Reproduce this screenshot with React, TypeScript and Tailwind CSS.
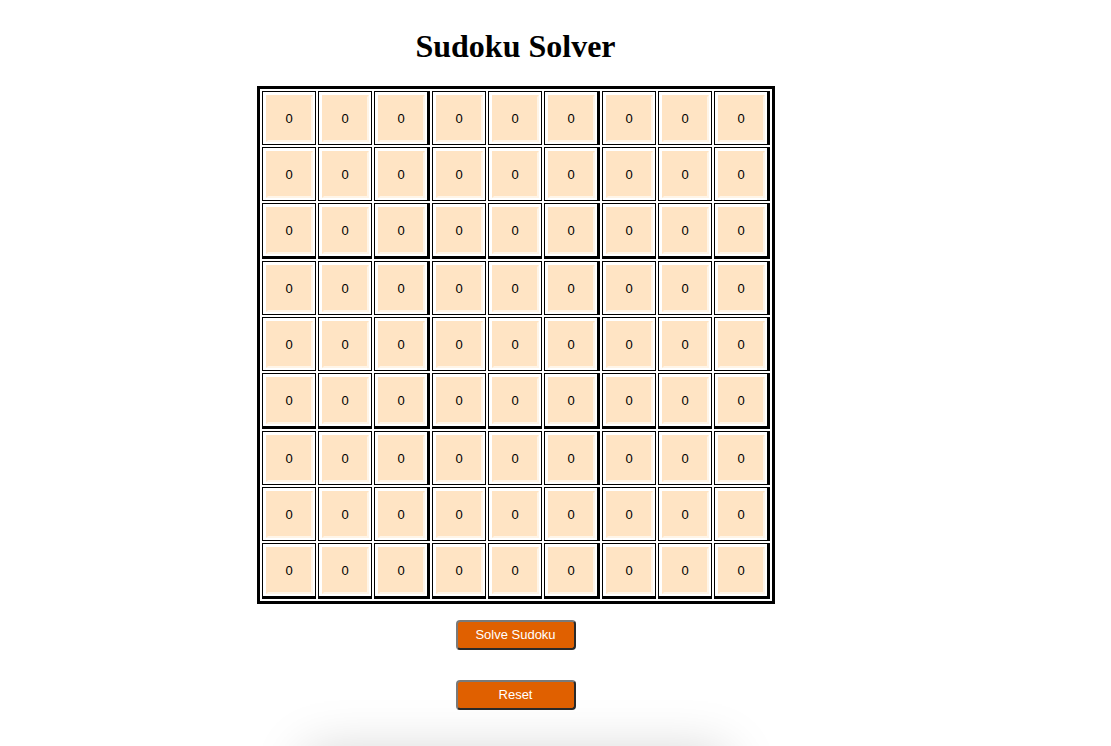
import React, { useState } from 'react';

const emptyBoard = () => Array.from({ length: 9 }, () => Array.from({ length: 9 }, () => 0));

const App = () => {
  const [board, setBoard] = useState<number[][]>(emptyBoard());

  const update = (r: number, c: number, v: string) => {
    const n = parseInt(v, 10);
    const next = board.map((row) => [...row]);
    next[r][c] = isNaN(n) ? 0 : Math.max(0, Math.min(9, n));
    setBoard(next);
  };

  return (
    <div className="w-[1031px] flex flex-col items-center pt-[28px] font-['Liberation_Sans',Arial,sans-serif]">
      <h1 className="font-['Liberation_Serif','Times_New_Roman',serif] font-bold text-[32px] leading-[37px] text-black mb-[21px]">
        Sudoku Solver
      </h1>
      <table className="border-separate border-spacing-[2px] border-[3px] border-black">
        <tbody>
          {board.map((row, r) => (
            <tr key={r}>
              {row.map((val, c) => (
                <td
                  key={c}
                  className={`p-0 border-black border-t border-l ${
                    c % 3 === 2 ? 'border-r-[3px]' : 'border-r'
                  } ${r % 3 === 2 ? 'border-b-[3px]' : 'border-b'}`}
                >
                  <div className="pt-[3px] pl-[3px] pr-[2px] pb-[2px]">
                    <input
                      value={val}
                      onChange={(e) => update(r, c, e.target.value)}
                      className="block w-[47px] h-[47px] bg-[#ffe4c4] text-center text-[13px] text-black border-2 border-t-[#ffe4c4] border-l-[#ffe4c4] border-r-[#fff5e8] border-b-[#fff5e8] outline-none"
                    />
                  </div>
                </td>
              ))}
            </tr>
          ))}
        </tbody>
      </table>
      <button
        onClick={() => {}}
        className="mt-[16px] w-[120px] h-[30px] bg-[#e06000] text-white text-[13px] rounded-[4px] border-2 border-t-[#7a7a7a] border-l-[#7a7a7a] border-r-[#2a2a2a] border-b-[#2a2a2a]"
      >
        Solve Sudoku
      </button>
      <button
        onClick={() => setBoard(emptyBoard())}
        className="mt-[30px] w-[120px] h-[30px] bg-[#e06000] text-white text-[13px] rounded-[4px] border-2 border-t-[#7a7a7a] border-l-[#7a7a7a] border-r-[#2a2a2a] border-b-[#2a2a2a]"
      >
        Reset
      </button>
      <div className="mt-[42px] w-[420px] h-[200px] bg-white shadow-[0_0_50px_rgba(0,0,0,0.18)]" />
    </div>
  );
};

export default App;
